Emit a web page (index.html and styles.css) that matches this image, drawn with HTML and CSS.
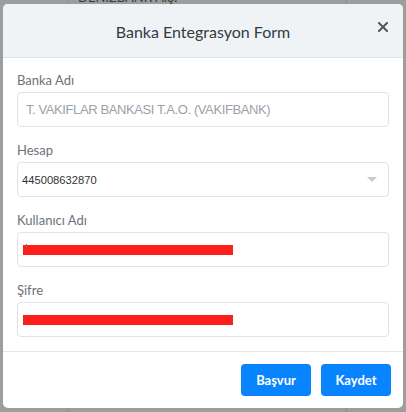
FILE: index.html
```html
<!DOCTYPE html>
<html lang="tr">
<head>
<meta charset="utf-8">
<title>Banka Entegrasyon Form</title>
<link rel="stylesheet" href="styles.css">
</head>
<body>
<div class="page">
  <div class="bg-row">
    <div class="bg-cell bg-first"></div>
    <div class="bg-cell bg-mid"><span class="bg-text">DENİZBANK A.Ş.</span></div>
    <div class="bg-cell bg-last"></div>
  </div>
  <div class="bg-row bg-tall">
    <div class="bg-cell bg-first"></div>
    <div class="bg-cell bg-mid"></div>
    <div class="bg-cell bg-last"></div>
  </div>
</div>
<div class="modal">
  <div class="modal-header">
    <h5 class="modal-title">Banka Entegrasyon Form</h5>
    <button class="close" type="button" aria-label="Kapat">
      <svg width="10" height="10" viewBox="0 0 10 10"><path d="M1 1 L9 9 M9 1 L1 9" stroke="#555" stroke-width="2" stroke-linecap="square"/></svg>
    </button>
  </div>
  <div class="modal-body">
    <div class="group">
      <label class="label">Banka Adı</label>
      <div class="input input-disabled">T. VAKIFLAR BANKASI T.A.O. (VAKIFBANK)</div>
    </div>
    <div class="group">
      <label class="label">Hesap</label>
      <div class="input input-select">
        <span class="select-value">445008632870</span>
        <span class="caret"></span>
      </div>
    </div>
    <div class="group">
      <label class="label">Kullanıcı Adı</label>
      <div class="input input-masked"><span class="tick"></span><span class="redact"></span></div>
    </div>
    <div class="group">
      <label class="label">Şifre</label>
      <div class="input input-masked"><span class="redact"></span></div>
    </div>
  </div>
  <div class="modal-footer">
    <button class="btn" type="button">Başvur</button>
    <button class="btn" type="button">Kaydet</button>
  </div>
</div>
</body>
</html>
```
FILE: styles.css
```css
html, body {
  margin: 0;
  padding: 0;
}
body {
  width: 406px;
  height: 412px;
  overflow: hidden;
  background: #9d9d9d;
  position: relative;
  font-family: Lato, "Noto Sans", sans-serif;
}
.page {
  display: flex;
  flex-direction: column;
}
.bg-row {
  display: flex;
  height: 4px;
  overflow: hidden;
}
.bg-tall {
  height: 408px;
}
.bg-cell {
  border-right: 1px solid #8f8f8f;
}
.bg-first {
  width: 67px;
}
.bg-mid {
  width: 279px;
  padding-left: 10px;
  box-sizing: border-box;
}
.bg-last {
  flex: 1;
  border-right: none;
}
.bg-text {
  display: block;
  font-size: 13px;
  line-height: 13px;
  margin-top: -9px;
  color: #3c3c3c;
}
.modal {
  position: absolute;
  left: 3px;
  top: 4px;
  width: 400px;
  height: 404px;
  background: #fff;
  border-radius: 5px;
  overflow: hidden;
  display: flex;
  flex-direction: column;
}
.modal-header {
  height: 53px;
  background: #f0f3f6;
  border-bottom: 1px solid #dde2e7;
  display: flex;
  align-items: center;
  justify-content: center;
  position: relative;
}
.modal-title {
  margin: 0;
  font-size: 16px;
  font-weight: 400;
  color: #343a40;
  padding-top: 2px;
}
.close {
  position: absolute;
  right: 15px;
  top: 18px;
  width: 10px;
  height: 10px;
  padding: 0;
  border: 0;
  background: none;
  display: flex;
}
.modal-body {
  padding: 13px 14px 0;
  display: flex;
  flex-direction: column;
  gap: 14px;
  border-bottom: 1px solid #e3e7eb;
  padding-bottom: 14px;
}
.group {
  display: flex;
  flex-direction: column;
  gap: 3px;
}
.label {
  font-size: 13px;
  line-height: 18px;
  color: #6c727a;
}
.input {
  height: 35px;
  box-sizing: border-box;
  border: 1px solid #dfe3e8;
  border-radius: 4px;
  display: flex;
  align-items: center;
  font-family: "Liberation Sans", Arial, sans-serif;
}
.input-disabled {
  padding-left: 8px;
  font-size: 13px;
  letter-spacing: -0.4px;
  color: #9ba1a8;
}
.input-select {
  padding-left: 4px;
  padding-right: 11px;
  justify-content: space-between;
}
.select-value {
  font-size: 11.2px;
  color: #333;
}
.caret {
  width: 0;
  height: 0;
  border-left: 5px solid transparent;
  border-right: 5px solid transparent;
  border-top: 5px solid #c5cbd3;
}
.input-masked {
  padding-left: 5px;
  position: relative;
}
.redact {
  width: 210px;
  height: 10px;
  background: #ff1f1a;
}
.tick {
  position: absolute;
  left: 8px;
  top: 11px;
  width: 1px;
  height: 3px;
  background: #777;
}
.modal-footer {
  display: flex;
  justify-content: flex-end;
  gap: 10px;
  padding: 12px 12px 0;
}
.btn {
  width: 70px;
  height: 32px;
  border: 0;
  border-radius: 4px;
  background: #0984ff;
  color: #fff;
  font-family: Lato, "Noto Sans", sans-serif;
  font-weight: 700;
  font-size: 13px;
  padding: 0;
}
```
